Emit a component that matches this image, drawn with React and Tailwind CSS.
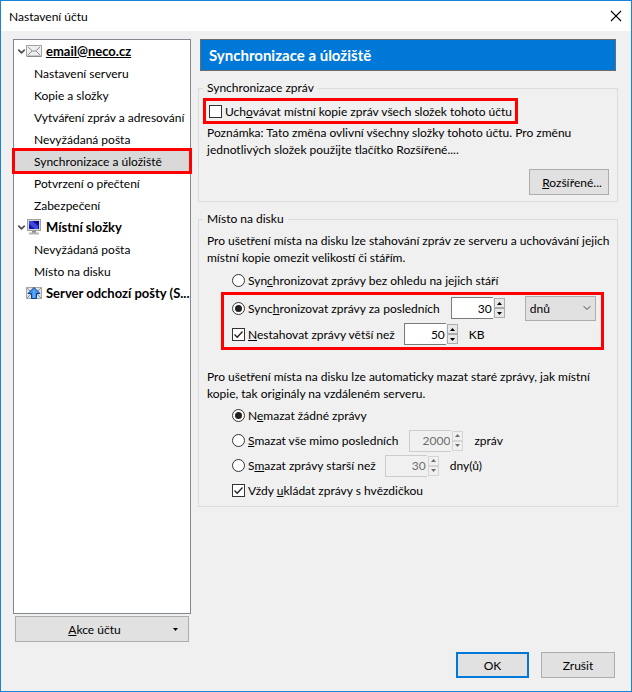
import { ChevronDown } from 'lucide-react';

const accounts = [
    {
        name: 'email@neco.cz',
        icon: MailIcon,
        current: true,
        items: [
            'Nastavení serveru',
            'Kopie a složky',
            'Vytváření zpráv a adresování',
            'Nevyžádaná pošta',
            'Synchronizace a úložiště',
            'Potvrzení o přečtení',
            'Zabezpečení',
        ],
    },
    {
        name: 'Místní složky',
        icon: ComputerIcon,
        items: ['Nevyžádaná pošta', 'Místo na disku'],
    },
    {
        name: 'Server odchozí pošty (S...',
        icon: OutgoingIcon,
        items: [],
    },
];

const selectedItem = 'Synchronizace a úložiště';

function MailIcon() {
    return (
        <svg viewBox="0 0 16 12" className="h-3 w-4 shrink-0">
            <rect x="0.5" y="0.5" width="15" height="10.5" fill="#efefef" stroke="#a3a3a3" />
            <path d="M1 11.5h14.5" stroke="#8a8a8a" />
            <path d="M2 2l4.5 4h3L14 2M2 10l4-4M14 10l-4-4" fill="none" stroke="#8e8e8e" />
        </svg>
    );
}

function ComputerIcon() {
    return (
        <svg viewBox="0 0 16 16" className="h-4 w-4 shrink-0">
            <rect x="1.5" y="0.5" width="13" height="11" fill="#d8d8d4" stroke="#a0a09c" />
            <rect x="3" y="2" width="10" height="8" fill="#1414b8" />
            <path d="M3 2h3l6 5v3H9L3 5z" fill="#3a4bdc" />
            <path d="M8 2h5v4z" fill="#0a0a80" />
            <rect x="6" y="12" width="4" height="2" fill="#8f8f8b" />
            <path d="M3 14.5h10" stroke="#b4b4b0" strokeWidth="2" />
        </svg>
    );
}

function OutgoingIcon() {
    return (
        <svg viewBox="0 0 16 12" className="h-3 w-4 shrink-0">
            <rect x="0.5" y="0.5" width="15" height="11" fill="#e2e2e2" stroke="#a8a8a8" />
            <path d="M1 1l5 5-5 5M15 1l-5 5 5 5" fill="none" stroke="#8e8e8e" />
            <path d="M8 0.5L2 6.5H5.5v5h5v-5H14z" fill="#3f93ee" stroke="#0c3f94" />
            <path d="M8 3v8" stroke="#5aa9f5" strokeWidth="2" />
        </svg>
    );
}

function Check({ id, checked }) {
    return (
        <span className="grid shrink-0">
            <input
                id={id}
                type="checkbox"
                defaultChecked={checked}
                className="peer col-start-1 row-start-1 h-[13px] w-[13px] appearance-none border border-[#333333] bg-white"
            />
            <svg
                viewBox="0 0 13 13"
                className="pointer-events-none invisible col-start-1 row-start-1 h-[13px] w-[13px] peer-checked:visible"
            >
                <path d="M2.5 6.5l2.7 2.8 5.3-5.8" fill="none" stroke="#222222" strokeWidth="1.3" />
            </svg>
        </span>
    );
}

function Radio({ id, name, checked }) {
    return (
        <span className="grid shrink-0 place-items-center">
            <input
                id={id}
                type="radio"
                name={name}
                defaultChecked={checked}
                className="peer col-start-1 row-start-1 h-[13px] w-[13px] appearance-none rounded-full border border-[#333333] bg-white"
            />
            <span className="pointer-events-none invisible col-start-1 row-start-1 h-[7px] w-[7px] rounded-full bg-[#222222] peer-checked:visible" />
        </span>
    );
}

function Arrow({ up, label, disabled }) {
    return (
        <button
            type="button"
            aria-label={label}
            disabled={disabled}
            className={`flex flex-1 items-center justify-center border ${
                disabled ? 'border-[#d5d5d5] text-[#6d6d6d]' : 'border-[#acacac] bg-[#e8e8e8] text-black'
            }`}
        >
            <svg viewBox="0 0 5 3" className="h-[3px] w-[5px]" fill="currentColor">
                <path d={up ? 'M0 3L2.5 0L5 3z' : 'M0 0L2.5 3L5 0z'} />
            </svg>
        </button>
    );
}

function NumberBox({ label, value, disabled }) {
    return (
        <span className="flex h-[22px] shrink-0">
            <input
                type="text"
                aria-label={label}
                defaultValue={value}
                disabled={disabled}
                className={`w-[42px] border border-r-0 pr-px text-right ${
                    disabled ? 'border-[#cccccc] text-[#6d6d6d]' : 'border-[#7a7a7a] bg-white'
                }`}
            />
            <span className="my-px ml-px flex w-[11px] flex-col">
                <Arrow up label={`${label} – více`} disabled={disabled} />
                <Arrow label={`${label} – méně`} disabled={disabled} />
            </span>
        </span>
    );
}

function AccountTree() {
    return (
        <ul className="flex-1 border border-[#828790] bg-white">
            {accounts.map((account) => (
                <li key={account.name}>
                    <div className="flex h-[22px] items-center pl-[2px]">
                        <span className="w-[10px] shrink-0">
                            {account.items.length > 0 && (
                                <ChevronDown className="h-[11px] w-[11px] text-[#555555]" strokeWidth={4} />
                            )}
                        </span>
                        <account.icon />
                        <span
                            className={`ml-1 whitespace-nowrap text-[13px] font-bold ${
                                account.current ? 'underline' : ''
                            }`}
                        >
                            {account.name}
                        </span>
                    </div>
                    <ul>
                        {account.items.map((item) => (
                            <li
                                key={item}
                                className={`relative flex h-[22px] items-center whitespace-nowrap pl-5 ${
                                    item === selectedItem ? 'bg-[#d9d9d9]' : ''
                                }`}
                            >
                                {item}
                                {item === selectedItem && (
                                    <span className="absolute -inset-x-[2px] -inset-y-[2px] border-[3px] border-[#ff0000]" />
                                )}
                            </li>
                        ))}
                    </ul>
                </li>
            ))}
        </ul>
    );
}

export default function App() {
    return (
        <div className="flex min-h-screen flex-col border border-[#1883d7] bg-[#f0f0f0] font-['Lato','Open_Sans',sans-serif] text-[12px] leading-[17px] text-black">
            <header className="flex h-[30px] items-center justify-between bg-white pl-2 pr-[9px]">
                <h1>Nastavení účtu</h1>
                <button type="button" aria-label="Zavřít">
                    <svg viewBox="0 0 12 12" className="h-3 w-3">
                        <path d="M1 1l10 10M11 1L1 11" stroke="#000000" strokeWidth="1.1" />
                    </svg>
                </button>
            </header>

            <main className="flex flex-1 gap-[7px] pl-3 pr-[13px] pt-2">
                <nav className="flex w-[178px] shrink-0 flex-col">
                    <AccountTree />
                    <button
                        type="button"
                        className="mx-[2px] mt-[2px] flex h-[26px] items-center border border-[#adadad] bg-[#e1e1e1] pr-[10px]"
                    >
                        <span className="flex-1">
                            <u>A</u>kce účtu
                        </span>
                        <svg viewBox="0 0 5 3" className="h-[3px] w-[5px]">
                            <path d="M0 0h5L2.5 3z" />
                        </svg>
                    </button>
                </nav>

                <form className="min-w-0 flex-1">
                    <h2 className="mx-[2px] flex h-8 items-center border border-[#6b6b6b] bg-[#0078d7] px-2 text-[15px] font-bold text-white">
                        Synchronizace a úložiště
                    </h2>

                    <fieldset className="mt-[9px] border border-[#dcdcdc] px-1 pb-[6px]">
                        <legend className="px-1 leading-4">Synchronizace zpráv</legend>
                        <div className="mt-[2px] flex h-[26px] w-fit items-center gap-[3px] border-[3px] border-[#ff0000] px-[3px]">
                            <Check id="keep-copies" />
                            <label htmlFor="keep-copies">
                                Uch<u>o</u>vávat místní kopie zpráv všech složek tohoto účtu
                            </label>
                        </div>
                        <p className="px-1">
                            Poznámka: Tato změna ovlivní všechny složky tohoto účtu. Pro změnu jednotlivých složek použijte
                            tlačítko Rozšířené....
                        </p>
                        <div className="mr-1 mt-[11px] flex justify-end">
                            <button type="button" className="h-[26px] w-20 border border-[#adadad] bg-[#e1e1e1] pl-[6px]">
                                <u>R</u>ozšířené...
                            </button>
                        </div>
                    </fieldset>

                    <fieldset className="mt-[9px] border border-[#dcdcdc] px-1 pb-[3px]">
                        <legend className="px-1 leading-4">Místo na disku</legend>
                        <p className="mt-[5px] pl-1">
                            Pro ušetření místa na disku lze stahování zpráv ze serveru a uchovávání jejich místní kopie omezit
                            velikostí či stářím.
                        </p>
                        <div className="ml-[29px] mt-[3px] flex h-[23px] items-center gap-[3px]">
                            <Radio id="sync-all" name="sync" />
                            <label htmlFor="sync-all">
                                Syn<u>c</u>hronizovat zprávy bez ohledu na jejich stáří
                            </label>
                        </div>
                        <div className="ml-[18px] mr-[9px] border-[3px] border-[#ff0000] pl-2">
                            <div className="flex h-[26px] items-center gap-[3px]">
                                <Radio id="sync-last" name="sync" checked />
                                <label htmlFor="sync-last" className="mr-2 whitespace-nowrap">
                                    Sync<u>h</u>ronizovat zprávy za posledních
                                </label>
                                <NumberBox label="Počet období" value="30" />
                                <span className="relative ml-[17px] flex items-center">
                                    <select
                                        aria-label="Období"
                                        className="h-[25px] w-[71px] appearance-none border border-[#adadad] bg-[#e1e1e1] pl-1"
                                    >
                                        <option>dnů</option>
                                        <option>týdnů</option>
                                        <option>měsíců</option>
                                        <option>let</option>
                                    </select>
                                    <ChevronDown
                                        className="pointer-events-none absolute right-[3px] h-3 w-3 text-[#444444]"
                                        strokeWidth={2}
                                    />
                                </span>
                            </div>
                            <div className="flex h-[26px] items-center gap-[3px]">
                                <Check id="size-limit" checked />
                                <label htmlFor="size-limit" className="mr-[6px]">
                                    <u>N</u>estahovat zprávy větší než
                                </label>
                                <NumberBox label="Velikost zprávy" value="50" />
                                <span className="ml-2">KB</span>
                            </div>
                        </div>

                        <p className="mt-[18px] pl-1">
                            Pro ušetření místa na disku lze automaticky mazat staré zprávy, jak místní kopie, tak originály na
                            vzdáleném serveru.
                        </p>
                        <div className="ml-[29px] mt-px">
                            <div className="flex h-[25px] items-center gap-[3px]">
                                <Radio id="delete-none" name="delete" checked />
                                <label htmlFor="delete-none">
                                    N<u>e</u>mazat žádné zprávy
                                </label>
                            </div>
                            <div className="flex h-[25px] items-center gap-[3px]">
                                <Radio id="delete-count" name="delete" />
                                <label htmlFor="delete-count" className="mr-2">
                                    <u>S</u>mazat vše mimo posledních
                                </label>
                                <NumberBox label="Počet zpráv" value="2000" disabled />
                                <span className="ml-2">zpráv</span>
                            </div>
                            <div className="flex h-[25px] items-center gap-[3px]">
                                <Radio id="delete-age" name="delete" />
                                <label htmlFor="delete-age" className="mr-[6px]">
                                    S<u>m</u>azat zprávy starší než
                                </label>
                                <NumberBox label="Stáří zpráv" value="30" disabled />
                                <span className="ml-2">dny(ů)</span>
                            </div>
                            <div className="flex h-[25px] items-center gap-[3px]">
                                <Check id="keep-starred" checked />
                                <label htmlFor="keep-starred">
                                    Vždy <u>u</u>kládat zprávy s hvězdičkou
                                </label>
                            </div>
                        </div>
                    </fieldset>
                </form>
            </main>

            <footer className="flex justify-end gap-3 pb-[13px] pl-4 pr-4 pt-[10px]">
                <button type="button" className="h-[26px] w-[73px] border-2 border-[#0078d7] bg-[#e1e1e1]">
                    OK
                </button>
                <button type="button" className="h-[26px] w-[74px] border border-[#adadad] bg-[#e1e1e1]">
                    Zrušit
                </button>
            </footer>
        </div>
    );
}
